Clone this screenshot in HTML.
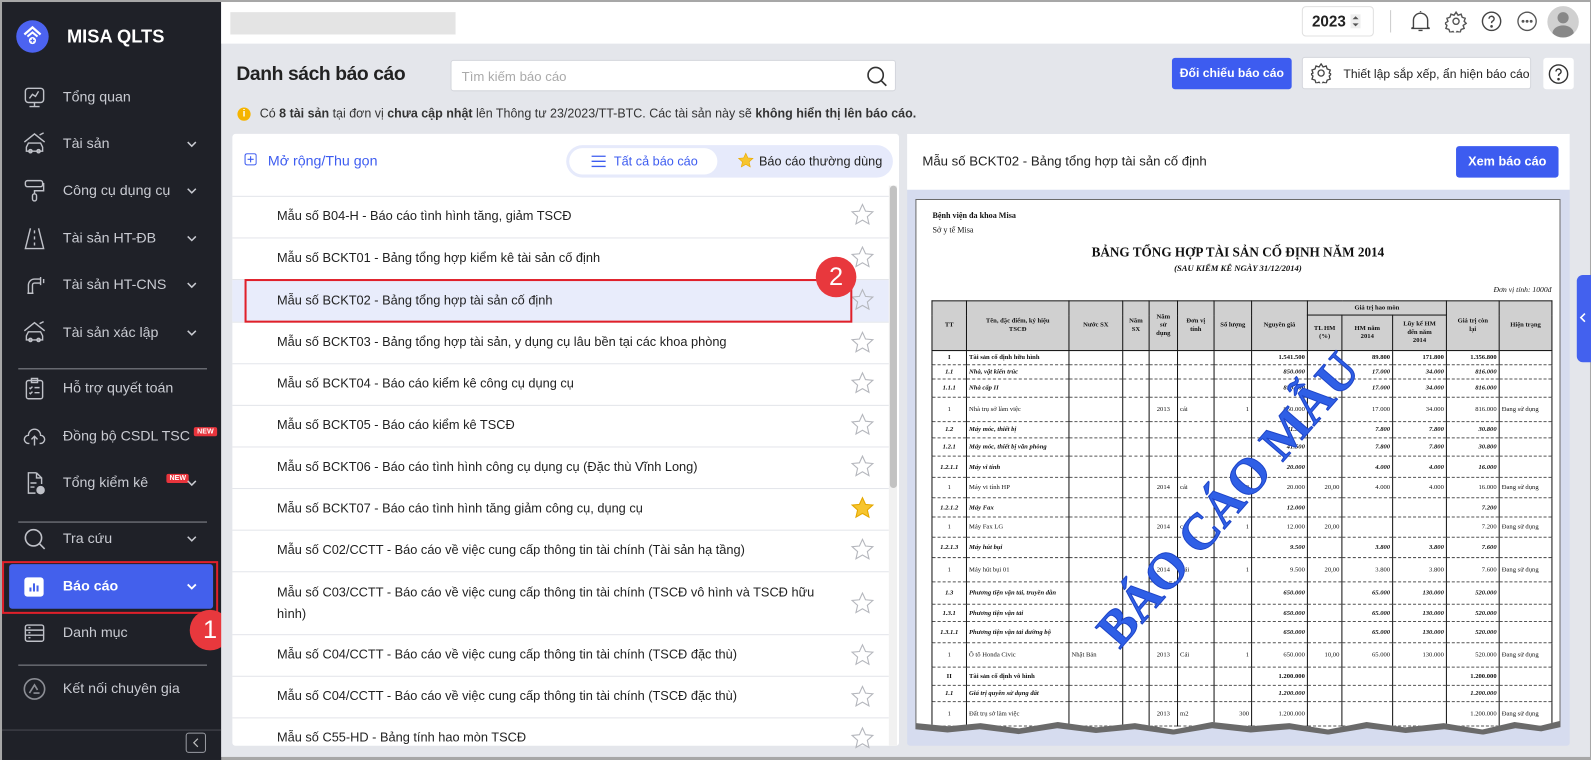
<!DOCTYPE html>
<html><head><meta charset="utf-8">
<style>
*{box-sizing:border-box;margin:0;padding:0}
html,body{width:1591px;height:760px;overflow:hidden;background:#a7a7a7;font-family:"Liberation Sans",sans-serif}
#root{position:absolute;left:0;top:0;width:1568px;height:749px;transform:scale(1.01467);transform-origin:0 0;background:#a7a7a7}
.abs{position:absolute}
#side{left:2px;top:2px;width:216px;height:747px;background:#1f2128}
.ni{position:absolute;left:0;width:216px;height:40px;color:#c9cbd2;font-size:14px}
.ni .ic{position:absolute;left:20px;top:8px;width:24px;height:24px}
.ni .tx{position:absolute;left:60px;top:11px}
.ni .ch{position:absolute;left:182px;top:15px;width:10px;height:10px}
.div{position:absolute;left:16px;width:186px;height:1px;background:#8a8c93}
.new{display:inline-block;background:#e8343c;color:#fff;font-size:7px;font-weight:bold;padding:1px 3px;border-radius:2px;vertical-align:top;margin-left:4px}
#main{left:218px;top:2px;width:1349px;height:744px;background:#e4e6eb}
.row{position:absolute;left:229px;width:647px;border-bottom:1px solid #e3e5ea;font-size:12.6px;color:#222}
.row span{position:absolute;left:44px}
table.rp{position:absolute;left:15px;top:99px;border-collapse:collapse;font-family:"Liberation Serif",serif;font-size:6.5px;color:#111;table-layout:fixed}
table.rp td{border-left:1px solid #111;border-right:1px solid #111;border-bottom:1px dashed #555;padding:0 2px;overflow:hidden;white-space:nowrap;line-height:7px}
table.rp th{border:1px solid #111;background:#d0d0d0;font-weight:bold;font-size:6.5px;line-height:8px;padding:0}
table.rp td.c{text-align:center}
table.rp td.r{text-align:right}
.b td{font-weight:bold}
.i td{font-style:italic;font-weight:bold}
</style></head><body><div id="root">

<!-- SIDEBAR -->
<div id="side" class="abs">
  <div class="abs" style="left:14px;top:18px;width:32px;height:32px;border-radius:50%;background:#4c63f0"></div>
  <svg class="abs" style="left:20px;top:22px" width="20" height="22" viewBox="0 0 20 22"><path d="M2 10 L10 3 L18 10" fill="none" stroke="#fff" stroke-width="2.2"/><path d="M5 12 L10 8 L15 12" fill="none" stroke="#fff" stroke-width="2"/><circle cx="10" cy="16" r="3.5" fill="#fff"/><path d="M10 14v4M8 16h4" stroke="#4c63f0" stroke-width="1.3"/></svg>
  <div class="abs" style="left:64px;top:24px;color:#fff;font-weight:bold;font-size:18px">MISA QLTS</div>

  <div class="ni" style="top:74px"><svg class="ic" viewBox="0 0 24 24" fill="none" stroke="#bfc1c8" stroke-width="1.4"><rect x="3" y="3" width="18" height="14" rx="3"/><path d="M7 13l3-4 3 2 3-5M12 17v4M7 21h10"/></svg><span class="tx">Tổng quan</span></div>
  <div class="ni" style="top:120px"><svg class="ic" viewBox="0 0 24 24" fill="none" stroke="#bfc1c8" stroke-width="1.4"><path d="M2 10L12 2l10 8M17 3l4 -2"/><path d="M4 15l2-4h12l2 4v4H4z"/><circle cx="8" cy="19" r="1.6"/><circle cx="16" cy="19" r="1.6"/></svg><span class="tx">Tài sản</span><svg class="ch" viewBox="0 0 10 10"><path d="M1 3l4 4 4-4" fill="none" stroke="#c9cbd2" stroke-width="1.5"/></svg></div>
  <div class="ni" style="top:166px"><svg class="ic" viewBox="0 0 24 24" fill="none" stroke="#bfc1c8" stroke-width="1.4"><rect x="3" y="2" width="17" height="6" rx="2"/><path d="M20 5h1v7h-9v3"/><rect x="10" y="15" width="4" height="7" rx="2"/></svg><span class="tx">Công cụ dụng cụ</span><svg class="ch" viewBox="0 0 10 10"><path d="M1 3l4 4 4-4" fill="none" stroke="#c9cbd2" stroke-width="1.5"/></svg></div>
  <div class="ni" style="top:213px"><svg class="ic" viewBox="0 0 24 24" fill="none" stroke="#bfc1c8" stroke-width="1.4"><path d="M8 2L3 22h18L16 2M12 4v3M12 10v3M12 16v3"/></svg><span class="tx">Tài sản HT-ĐB</span><svg class="ch" viewBox="0 0 10 10"><path d="M1 3l4 4 4-4" fill="none" stroke="#c9cbd2" stroke-width="1.5"/></svg></div>
  <div class="ni" style="top:259px"><svg class="ic" viewBox="0 0 24 24" fill="none" stroke="#bfc1c8" stroke-width="1.4"><path d="M6 20v-8a6 6 0 0 1 6-6h6M10 20v-8a2 2 0 0 1 2-2h6M18 4v8M21 6v4M5 20h6"/></svg><span class="tx">Tài sản HT-CNS</span><svg class="ch" viewBox="0 0 10 10"><path d="M1 3l4 4 4-4" fill="none" stroke="#c9cbd2" stroke-width="1.5"/></svg></div>
  <div class="ni" style="top:306px"><svg class="ic" viewBox="0 0 24 24" fill="none" stroke="#bfc1c8" stroke-width="1.4"><path d="M2 10L12 2l10 8M17 3l4 -2"/><path d="M4 15l2-4h12l2 4v4H4z"/><circle cx="8" cy="19" r="1.6"/><circle cx="16" cy="19" r="1.6"/></svg><span class="tx">Tài sản xác lập</span><svg class="ch" viewBox="0 0 10 10"><path d="M1 3l4 4 4-4" fill="none" stroke="#c9cbd2" stroke-width="1.5"/></svg></div>
  <div class="div" style="top:361px"></div>
  <div class="ni" style="top:361px"><svg class="ic" viewBox="0 0 24 24" fill="none" stroke="#bfc1c8" stroke-width="1.4"><rect x="4" y="4" width="16" height="18" rx="2"/><rect x="9" y="2" width="6" height="4"/><path d="M7 11l1 1 2-2M12 11h5M7 16l1 1 2-2M12 16h5"/></svg><span class="tx">Hỗ trợ quyết toán</span></div>
  <div class="ni" style="top:408px"><svg class="ic" viewBox="0 0 24 24" fill="none" stroke="#bfc1c8" stroke-width="1.4"><path d="M7 19H6a4 4 0 0 1 0-8 6 6 0 0 1 12 0 4 4 0 0 1 0 8h-1M12 21v-9M9 15l3-3 3 3"/></svg><span class="tx">Đồng bộ CSDL TSC<span class="new">NEW</span></span></div>
  <div class="ni" style="top:454px"><svg class="ic" viewBox="0 0 24 24" fill="none" stroke="#bfc1c8" stroke-width="1.4"><path d="M14 2H6v20h7M14 2l5 5v6M14 2v5h5M8 12h6M8 16h4"/><circle cx="18" cy="19" r="3.5" fill="#bfc1c8"/></svg><span class="tx">Tổng kiểm kê<span class="new" style="margin-left:18px">NEW</span></span><svg class="ch" viewBox="0 0 10 10"><path d="M1 3l4 4 4-4" fill="none" stroke="#c9cbd2" stroke-width="1.5"/></svg></div>
  <div class="div" style="top:512px"></div>
  <div class="ni" style="top:509px"><svg class="ic" viewBox="0 0 24 24" fill="none" stroke="#bfc1c8" stroke-width="1.6"><circle cx="11" cy="11" r="8"/><path d="M17 17l5 5"/></svg><span class="tx">Tra cứu</span><svg class="ch" viewBox="0 0 10 10"><path d="M1 3l4 4 4-4" fill="none" stroke="#c9cbd2" stroke-width="1.5"/></svg></div>
  <div class="abs" style="left:7px;top:554px;width:201px;height:44px;background:#4360ec;border-radius:3px"></div>
  <div class="ni" style="top:556px;color:#fff;font-weight:bold"><div class="abs" style="left:22px;top:11px;width:19px;height:19px;background:#fff;border-radius:3px"></div><svg class="abs" style="left:22px;top:11px" width="19" height="19"><path d="M6 14v-4M9.5 14V6M13 14v-6" stroke="#4360ec" stroke-width="2"/></svg><span class="tx">Báo cáo</span><svg class="ch" viewBox="0 0 10 10"><path d="M1 3l4 4 4-4" fill="none" stroke="#fff" stroke-width="1.8"/></svg></div>
  <div class="ni" style="top:602px"><svg class="ic" viewBox="0 0 24 24" fill="none" stroke="#bfc1c8" stroke-width="1.4"><rect x="3" y="4" width="18" height="16" rx="2"/><path d="M3 9h18M3 14h18M6 6.5h2M6 11.5h2M6 16.5h2"/></svg><span class="tx">Danh mục</span></div>
  <div class="div" style="top:653px"></div>
  <div class="ni" style="top:657px"><svg class="ic" viewBox="0 0 24 24" fill="none" stroke="#8c8e95" stroke-width="1.6"><circle cx="12" cy="12" r="10"/><path d="M7 16l5-8 3 5M11 16h6"/></svg><span class="tx">Kết nối chuyên gia</span></div>
  <div class="abs" style="left:0;top:717px;width:216px;height:1px;background:#4a4c53"></div>
  <div class="abs" style="left:181px;top:720px;width:20px;height:20px;border:1px solid #9a9ca3;border-radius:3px"></div>
  <svg class="abs" style="left:181px;top:720px" width="20" height="20"><path d="M12 6l-4 4 4 4" fill="none" stroke="#bbb" stroke-width="1.2"/></svg>
</div>
<div class="abs" style="left:2px;top:553px;width:213px;height:52px;border:2px solid #e0202a"></div>
<div class="abs" style="left:187px;top:601px;width:40px;height:40px;border-radius:50%;background:#e8383d;color:#fff;font-size:25px;text-align:center;line-height:40px">1</div>

<!-- MAIN -->
<div id="main" class="abs">
  <div class="abs" style="left:0;top:0;width:1349px;height:41px;background:#fff"></div>
</div>
<div class="abs" style="left:227px;top:12px;width:222px;height:22px;background:#e4e4e4"></div>
<div class="abs" style="left:1283px;top:6px;width:71px;height:30px;border:1px solid #e0e0e0;border-radius:4px;font-size:15px;font-weight:bold;color:#222;padding:6px 0 0 9px">2023</div>
<svg class="abs" style="left:1331px;top:14px" width="10" height="14"><rect width="10" height="14" fill="#eee"/><path d="M2 5l3-3 3 3zM2 9l3 3 3-3z" fill="#555"/></svg>
<div class="abs" style="left:1370px;top:10px;width:1px;height:22px;background:#ccc"></div>
<svg class="abs" style="left:1389px;top:9px" width="22" height="24" fill="none" stroke="#444" stroke-width="1.4"><path d="M4 18V11a7 7 0 0 1 14 0v7l2 1H2zM9 21h4M11 3V2"/></svg>
<svg class="abs" style="left:1424px;top:10px" width="22" height="22" fill="none" stroke="#555" stroke-width="1.4"><circle cx="11" cy="11" r="3"/><path d="M11 2l2 3 3-1 1 3 3 1-1 3 2 2-3 2 1 3-3 1-1 3-3-1-2 3-2-3-3 1-1-3-3-1 1-3-2-2 3-2-1-3 3-1 1-3 3 1z"/></svg>
<svg class="abs" style="left:1459px;top:10px" width="22" height="22" fill="none" stroke="#444" stroke-width="1.4"><circle cx="11" cy="11" r="9"/><path d="M8.5 8.5a2.5 2.5 0 1 1 3.5 2.3c-.8.4-1 1-1 2"/><circle cx="11" cy="16" r=".6" fill="#444"/></svg>
<svg class="abs" style="left:1494px;top:10px" width="22" height="22" fill="none" stroke="#555" stroke-width="1.3"><circle cx="11" cy="11" r="9"/><circle cx="7" cy="11" r=".8" fill="#555"/><circle cx="11" cy="11" r=".8" fill="#555"/><circle cx="15" cy="11" r=".8" fill="#555"/></svg>
<div class="abs" style="left:1525px;top:6px;width:31px;height:31px;border-radius:50%;background:#d0d0d0;overflow:hidden"><div class="abs" style="left:10px;top:6px;width:11px;height:11px;border-radius:50%;background:#888"></div><div class="abs" style="left:5px;top:19px;width:21px;height:16px;border-radius:50%;background:#888"></div></div>

<div class="abs" style="left:233px;top:63px;font-size:19px;color:#222;font-weight:bold;letter-spacing:-.4px">Danh sách báo cáo</div>
<div class="abs" style="left:444px;top:59px;width:439px;height:31px;background:#fff;border:1px solid #d4d6dc;border-radius:3px;font-size:13px;color:#aaa;padding:8px 0 0 10px">Tìm kiếm báo cáo</div>
<svg class="abs" style="left:853px;top:64px" width="22" height="22" fill="none" stroke="#333" stroke-width="1.6"><circle cx="10" cy="10" r="7.5"/><path d="M15.5 15.5l5 5"/></svg>
<div class="abs" style="left:1155px;top:57px;width:118px;height:31px;background:#3d5cf0;border-radius:3px;color:#fff;font-size:12px;font-weight:bold;text-align:center;line-height:31px">Đối chiếu báo cáo</div>
<div class="abs" style="left:1283px;top:56px;width:226px;height:32px;background:#fff;border:1px solid #d4d6dc;border-radius:3px;font-size:12px;color:#222;padding:9px 0 0 40px">Thiết lập sắp xếp, ẩn hiện báo cáo</div>
<svg class="abs" style="left:1292px;top:62px" width="20" height="20" fill="none" stroke="#444" stroke-width="1.3"><circle cx="10" cy="10" r="3"/><path d="M10 1l2 3 3-1 1 3 3 1-1 3 2 1-2 2 1 3-3 1-1 3-3-1-2 3-2-3-3 1-1-3-3-1 1-3-2-2 2-1-1-3 3-1 1-3 3 1z"/></svg>
<div class="abs" style="left:1521px;top:57px;width:30px;height:31px;background:#fff;border-radius:3px"></div>
<svg class="abs" style="left:1525px;top:62px" width="22" height="22" fill="none" stroke="#333" stroke-width="1.4"><circle cx="11" cy="11" r="9"/><path d="M8.5 8.5a2.5 2.5 0 1 1 3.5 2.3c-.8.4-1 1-1 2"/><circle cx="11" cy="16" r=".6" fill="#333"/></svg>

<div class="abs" style="left:234px;top:106px;width:13px;height:13px;border-radius:50%;background:#f5b400;color:#fff;font-size:10px;font-weight:bold;text-align:center;line-height:13px">i</div>
<div class="abs" style="left:256px;top:105px;font-size:12.3px;color:#333">Có <b>8 tài sản</b> tại đơn vị <b>chưa cập nhật</b> lên Thông tư 23/2023/TT-BTC. Các tài sản này sẽ <b>không hiển thị lên báo cáo.</b></div>

<!-- LIST PANEL -->
<div class="abs" style="left:229px;top:132px;width:657px;height:603px;background:#fff;border-radius:3px"></div>
<svg class="abs" style="left:241px;top:151px" width="12" height="12" fill="none" stroke="#3d5cf0" stroke-width="1.1"><rect x=".5" y=".5" width="11" height="11" rx="2"/><path d="M6 3v6M3 6h6"/></svg>
<div class="abs" style="left:264px;top:150px;font-size:14px;color:#3d5cf0">Mở rộng/Thu gọn</div>
<div class="abs" style="left:558px;top:143px;width:322px;height:32px;background:#e6eafb;border-radius:16px"></div>
<div class="abs" style="left:561px;top:146px;width:146px;height:26px;background:#fff;border-radius:13px;font-size:12.5px;color:#3d5cf0;padding:6px 0 0 44px">Tất cả báo cáo</div>
<svg class="abs" style="left:583px;top:153px" width="14" height="12" stroke="#3d5cf0" stroke-width="1.3"><path d="M0 1h14M0 6h14M0 11h14"/></svg>
<svg class="abs" style="left:727px;top:150px" width="16" height="16"><path d="M8 1l2.1 4.6 5 .5-3.8 3.4 1.1 5L8 12 3.6 14.5l1.1-5L.9 6.1l5-.5z" fill="#f7c52e" stroke="#e9a800" stroke-width=".6"/></svg>
<div class="abs" style="left:748px;top:152px;font-size:12.5px;color:#222">Báo cáo thường dùng</div>
<div class="abs" style="left:229px;top:193px;width:647px;height:1px;background:#e3e5ea"></div>

<div class="abs" style="left:229px;top:276px;width:647px;height:41px;background:#e8ecfb"></div>
<div class="row" style="top:194px;height:41px"><span style="top:12px">Mẫu số B04-H - Báo cáo tình hình tăng, giảm TSCĐ</span></div>
<div class="row" style="top:235px;height:41px"><span style="top:12px">Mẫu số BCKT01 - Bảng tổng hợp kiểm kê tài sản cố định</span></div>
<div class="row" style="top:276px;height:42px"><span style="top:13px">Mẫu số BCKT02 - Bảng tổng hợp tài sản cố định</span></div>
<div class="row" style="top:318px;height:41px"><span style="top:12px">Mẫu số BCKT03 - Bảng tổng hợp tài sản, y dụng cụ lâu bền tại các khoa phòng</span></div>
<div class="row" style="top:359px;height:41px"><span style="top:12px">Mẫu số BCKT04 - Báo cáo kiểm kê công cụ dụng cụ</span></div>
<div class="row" style="top:400px;height:41px"><span style="top:12px">Mẫu số BCKT05 - Báo cáo kiểm kê TSCĐ</span></div>
<div class="row" style="top:441px;height:41px"><span style="top:12px">Mẫu số BCKT06 - Báo cáo tình hình công cụ dụng cụ (Đặc thù Vĩnh Long)</span></div>
<div class="row" style="top:482px;height:41px"><span style="top:12px">Mẫu số BCKT07 - Báo cáo tình hình tăng giảm công cụ, dụng cụ</span></div>
<div class="row" style="top:523px;height:41px"><span style="top:12px">Mẫu số C02/CCTT - Báo cáo về việc cung cấp thông tin tài chính (Tài sản hạ tầng)</span></div>
<div class="row" style="top:564px;height:62px"><span style="top:10px;width:540px;line-height:21px">Mẫu số C03/CCTT - Báo cáo về việc cung cấp thông tin tài chính (TSCĐ vô hình và TSCĐ hữu hình)</span></div>
<div class="row" style="top:626px;height:41px"><span style="top:12px">Mẫu số C04/CCTT - Báo cáo về việc cung cấp thông tin tài chính (TSCĐ đặc thù)</span></div>
<div class="row" style="top:667px;height:41px"><span style="top:12px">Mẫu số C04/CCTT - Báo cáo về việc cung cấp thông tin tài chính (TSCĐ đặc thù)</span></div>
<div class="row" style="top:708px;height:27px;border:none"><span style="top:12px">Mẫu số C55-HD - Bảng tính hao mòn TSCĐ</span></div>

<svg class="abs" style="left:838px;top:200px" width="24" height="540" fill="none" stroke="#b5b7bd" stroke-width="1.1">
<defs><path id="st" d="M12 1.5l3 6.6 7.2.7-5.4 4.8 1.6 7.1L12 17l-6.4 3.7 1.6-7.1L1.8 8.8 9 8.1z"/></defs>
<use href="#st" y="0"/><use href="#st" y="42"/><use href="#st" y="84"/><use href="#st" y="126"/><use href="#st" y="166"/><use href="#st" y="207"/><use href="#st" y="248"/><use href="#st" y="289" fill="#f7c52e" stroke="#e5a800"/><use href="#st" y="330"/><use href="#st" y="383"/><use href="#st" y="434"/><use href="#st" y="475"/><use href="#st" y="516"/>
</svg>
<div class="abs" style="left:876px;top:183px;width:8px;height:552px;background:#f1f1f1"></div>
<div class="abs" style="left:877px;top:183px;width:7px;height:298px;background:#c2c2c2;border-radius:4px"></div>

<div class="abs" style="left:241px;top:275px;width:599px;height:43px;border:2px solid #e0202a"></div>
<div class="abs" style="left:804px;top:253px;width:40px;height:40px;border-radius:50%;background:#e8383d;color:#fff;font-size:25px;text-align:center;line-height:40px">2</div>

<!-- PREVIEW PANEL -->
<div class="abs" style="left:894px;top:132px;width:653px;height:603px;background:#d6dcef;border-radius:3px"></div>
<div class="abs" style="left:894px;top:132px;width:653px;height:55px;background:#fff"></div>
<div class="abs" style="left:909px;top:151px;font-size:13px;color:#222">Mẫu số BCKT02 - Bảng tổng hợp tài sản cố định</div>
<div class="abs" style="left:1435px;top:144px;width:101px;height:31px;background:#3d5cf0;border-radius:3px;color:#fff;font-size:12.5px;font-weight:bold;text-align:center;line-height:31px">Xem báo cáo</div>

<div class="abs" style="left:902px;top:196px;width:636px;height:528px;background:#6a6a6a;clip-path:polygon(0 0,100% 0,100% 98.6%,97% 99.4%,93% 98.8%,88% 100%,82% 99%,76% 99.7%,70% 98.8%,64% 100%,58% 99%,52% 99.6%,46% 98.8%,40% 100%,34% 99%,28% 99.7%,22% 98.8%,16% 99.9%,10% 99%,5% 99.6%,0 99%)"></div>
<div class="abs" style="left:903px;top:197px;width:634px;height:524px;background:#fff;overflow:hidden;clip-path:polygon(0 0,100% 0,100% 98%,97% 98.9%,93% 98.2%,88% 99.6%,82% 98.4%,76% 99.2%,70% 98.2%,64% 99.6%,58% 98.4%,52% 99%,46% 98.2%,40% 99.6%,34% 98.4%,28% 99.2%,22% 98.2%,16% 99.4%,10% 98.4%,5% 99%,0 98.4%)">
  <div class="abs" style="left:16px;top:11px;font-family:'Liberation Serif',serif;font-size:8px;font-weight:bold;color:#111">Bệnh viện đa khoa Misa</div>
  <div class="abs" style="left:16px;top:25px;font-family:'Liberation Serif',serif;font-size:8px;color:#111">Sở y tế Misa</div>
  <div class="abs" style="left:0;width:634px;top:44px;text-align:center;font-family:'Liberation Serif',serif;font-size:13px;font-weight:bold;color:#111">BẢNG TỔNG HỢP TÀI SẢN CỐ ĐỊNH NĂM 2014</div>
  <div class="abs" style="left:0;width:634px;top:62px;text-align:center;font-family:'Liberation Serif',serif;font-size:8.5px;font-style:italic;font-weight:bold;color:#111">(SAU KIỂM KÊ NGÀY 31/12/2014)</div>
  <div class="abs" style="right:8px;top:84px;font-family:'Liberation Serif',serif;font-size:7.5px;font-style:italic;color:#111">Đơn vị tính: 1000đ</div>
  <table class="rp">
   <colgroup><col style="width:34px"><col style="width:101px"><col style="width:53px"><col style="width:26px"><col style="width:28px"><col style="width:36px"><col style="width:37px"><col style="width:55px"><col style="width:34px"><col style="width:50px"><col style="width:53px"><col style="width:52px"><col style="width:52px"></colgroup>
   <tr style="height:14px"><th rowspan="2">TT</th><th rowspan="2">Tên, đặc điểm, ký hiệu<br>TSCĐ</th><th rowspan="2">Nước SX</th><th rowspan="2">Năm<br>SX</th><th rowspan="2">Năm<br>sử<br>dụng</th><th rowspan="2">Đơn vị<br>tính</th><th rowspan="2">Số lượng</th><th rowspan="2">Nguyên giá</th><th colspan="3">Giá trị hao mòn</th><th rowspan="2">Giá trị còn<br>lại</th><th rowspan="2">Hiện trạng</th></tr>
   <tr style="height:35px"><th>TL HM<br>(%)</th><th>HM năm<br>2014</th><th>Lũy kế HM<br>đến năm<br>2014</th></tr>
   <tr class="b" style="height:14px"><td class="c">I</td><td>Tài sản cố định hữu hình</td><td></td><td></td><td></td><td></td><td></td><td class="r">1.541.500</td><td></td><td class="r">89.800</td><td class="r">171.800</td><td class="r">1.356.800</td><td></td></tr>
   <tr class="i" style="height:14px"><td class="c">1.1</td><td>Nhà, vật kiến trúc</td><td></td><td></td><td></td><td></td><td></td><td class="r">850.000</td><td></td><td class="r">17.000</td><td class="r">34.000</td><td class="r">816.000</td><td></td></tr>
   <tr class="i" style="height:18px"><td class="c">1.1.1</td><td>Nhà cấp II</td><td></td><td></td><td></td><td></td><td></td><td class="r">850.000</td><td></td><td class="r">17.000</td><td class="r">34.000</td><td class="r">816.000</td><td></td></tr>
   <tr style="height:24px"><td class="c">1</td><td>Nhà trụ sở làm việc</td><td></td><td></td><td class="c">2013</td><td>cái</td><td class="r">1</td><td class="r">850.000</td><td></td><td class="r">17.000</td><td class="r">34.000</td><td class="r">816.000</td><td>Đang sử dụng</td></tr>
   <tr class="i" style="height:16px"><td class="c">1.2</td><td>Máy móc, thiết bị</td><td></td><td></td><td></td><td></td><td></td><td class="r">41.500</td><td></td><td class="r">7.800</td><td class="r">7.800</td><td class="r">30.800</td><td></td></tr>
   <tr class="i" style="height:18px"><td class="c">1.2.1</td><td style="white-space:normal">Máy móc, thiết bị văn phòng</td><td></td><td></td><td></td><td></td><td></td><td class="r">41.500</td><td></td><td class="r">7.800</td><td class="r">7.800</td><td class="r">30.800</td><td></td></tr>
   <tr class="i" style="height:21px"><td class="c">1.2.1.1</td><td>Máy vi tính</td><td></td><td></td><td></td><td></td><td></td><td class="r">20.000</td><td></td><td class="r">4.000</td><td class="r">4.000</td><td class="r">16.000</td><td></td></tr>
   <tr style="height:20px"><td class="c">1</td><td>Máy vi tính HP</td><td></td><td></td><td class="c">2014</td><td>cái</td><td class="r">2</td><td class="r">20.000</td><td class="r">20,00</td><td class="r">4.000</td><td class="r">4.000</td><td class="r">16.000</td><td>Đang sử dụng</td></tr>
   <tr class="i" style="height:19px"><td class="c">1.2.1.2</td><td>Máy Fax</td><td></td><td></td><td></td><td></td><td></td><td class="r">12.000</td><td></td><td></td><td></td><td class="r">7.200</td><td></td></tr>
   <tr style="height:20px"><td class="c">1</td><td>Máy Fax LG</td><td></td><td></td><td class="c">2014</td><td>cái</td><td class="r">1</td><td class="r">12.000</td><td class="r">20,00</td><td></td><td></td><td class="r">7.200</td><td>Đang sử dụng</td></tr>
   <tr class="i" style="height:20px"><td class="c">1.2.1.3</td><td>Máy hút bụi</td><td></td><td></td><td></td><td></td><td></td><td class="r">9.500</td><td></td><td class="r">3.800</td><td class="r">3.800</td><td class="r">7.600</td><td></td></tr>
   <tr style="height:24px"><td class="c">1</td><td>Máy hút bụi 01</td><td></td><td></td><td class="c">2014</td><td>Cái</td><td class="r">1</td><td class="r">9.500</td><td class="r">20,00</td><td class="r">3.800</td><td class="r">3.800</td><td class="r">7.600</td><td>Đang sử dụng</td></tr>
   <tr class="i" style="height:22px"><td class="c">1.3</td><td style="white-space:normal">Phương tiện vận tải, truyền dẫn</td><td></td><td></td><td></td><td></td><td></td><td class="r">650.000</td><td></td><td class="r">65.000</td><td class="r">130.000</td><td class="r">520.000</td><td></td></tr>
   <tr class="i" style="height:17px"><td class="c">1.3.1</td><td>Phương tiện vận tải</td><td></td><td></td><td></td><td></td><td></td><td class="r">650.000</td><td></td><td class="r">65.000</td><td class="r">130.000</td><td class="r">520.000</td><td></td></tr>
   <tr class="i" style="height:21px"><td class="c">1.3.1.1</td><td style="white-space:normal">Phương tiện vận tải đường bộ</td><td></td><td></td><td></td><td></td><td></td><td class="r">650.000</td><td></td><td class="r">65.000</td><td class="r">130.000</td><td class="r">520.000</td><td></td></tr>
   <tr style="height:24px"><td class="c">1</td><td>Ô tô Honda Civic</td><td>Nhật Bản</td><td></td><td class="c">2013</td><td>Cái</td><td class="r">1</td><td class="r">650.000</td><td class="r">10,00</td><td class="r">65.000</td><td class="r">130.000</td><td class="r">520.000</td><td>Đang sử dụng</td></tr>
   <tr class="b" style="height:18px"><td class="c">II</td><td>Tài sản cố định vô hình</td><td></td><td></td><td></td><td></td><td></td><td class="r">1.200.000</td><td></td><td></td><td></td><td class="r">1.200.000</td><td></td></tr>
   <tr class="i" style="height:16px"><td class="c">1.1</td><td>Giá trị quyền sử dụng đất</td><td></td><td></td><td></td><td></td><td></td><td class="r">1.200.000</td><td></td><td></td><td></td><td class="r">1.200.000</td><td></td></tr>
   <tr style="height:24px"><td class="c">1</td><td>Đất trụ sở làm việc</td><td></td><td></td><td class="c">2013</td><td>m2</td><td class="r">300</td><td class="r">1.200.000</td><td></td><td></td><td></td><td class="r">1.200.000</td><td>Đang sử dụng</td></tr>
  </table>
  <div class="abs" style="left:307px;top:295px;transform:translate(-50%,-50%) rotate(-49deg);font-family:'Liberation Serif',serif;font-weight:bold;font-size:50px;color:#2f5fe6;white-space:nowrap;-webkit-text-stroke:1px #1e45c8">BÁO CÁO MẪU</div>
</div>
<div class="abs" style="left:1554px;top:271px;width:14px;height:86px;background:#4361ee;border-radius:6px 0 0 6px"></div>
<svg class="abs" style="left:1556px;top:308px" width="8" height="10"><path d="M6 1L2 5l4 4" fill="none" stroke="#fff" stroke-width="1.6"/></svg>
</div></body></html>
